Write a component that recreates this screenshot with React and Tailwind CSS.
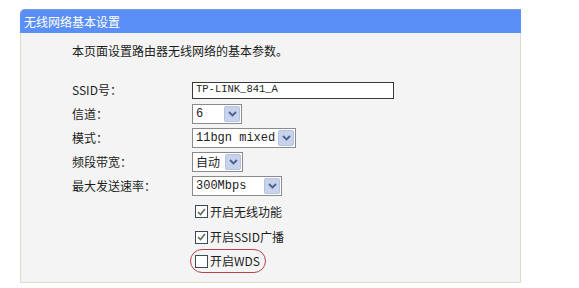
import React from 'react';

const cjk = { fontFamily: '"Noto Sans CJK SC", "Noto Sans", sans-serif' };
const mono = { fontFamily: '"Liberation Mono", "Noto Sans CJK SC", monospace' };

const Arrow = () => (
  <div className="w-[16px] h-[16px] bg-[#c7d3ec] border border-[#b4c3e2] rounded-[2px] flex items-center justify-center">
    <svg width="9" height="6" viewBox="0 0 9 6">
      <path d="M1 1 L4.5 4.5 L8 1" fill="none" stroke="#4a5f8c" strokeWidth="1.8" />
    </svg>
  </div>
);

const Select = ({ value, width, cjkText }) => (
  <div
    className="h-[20px] bg-white border border-[#8a8a8a] flex items-center justify-between pl-[3px] pr-[1px]"
    style={{ width }}
  >
    <span className="text-[12px] leading-[14px] text-[#222]" style={cjkText ? cjk : mono}>
      {value}
    </span>
    <Arrow />
  </div>
);

const Check = ({ checked }) => (
  <div className="w-[13px] h-[13px] bg-white border border-[#3d4a55] flex items-center justify-center">
    {checked && (
      <svg width="9" height="8" viewBox="0 0 9 8">
        <path d="M1 4 L3.5 6.5 L8 1" fill="none" stroke="#5a6e5a" strokeWidth="1.6" />
      </svg>
    )}
  </div>
);

const Row = ({ label, children }) => (
  <div className="h-[24px] flex items-center">
    <div className="w-[120px] text-[12px] text-[#1c1c1c]" style={cjk}>
      {label}
    </div>
    {children}
  </div>
);

const CheckRow = ({ label, checked, circled, h }) => (
  <div className="flex items-center pl-[118px]" style={{ height: h }}>
    <div
      className={
        'flex items-center gap-[2px] h-[24px] pl-[4px] pr-[5px] rounded-full border ' +
        (circled ? 'border-[#b8404e]' : 'border-transparent')
      }
    >
      <Check checked={checked} />
      <span className="text-[12px] text-[#1c1c1c]" style={cjk}>
        {label}
      </span>
    </div>
  </div>
);

export default function App() {
  return (
    <div className="w-[579px] h-[288px] bg-white pt-[9px] pl-[20px]">
      <div className="w-[501px]">
        <div className="h-[24px] bg-[#5b8ff8] border-t border-[#7a9fd8] rounded-tl-[5px] flex items-center pl-[4px]">
          <span className="text-[12px] text-white" style={cjk}>
            无线网络基本设置
          </span>
        </div>
        <div className="h-[250px] bg-[#f4f4f4] border-l border-r border-b border-[#dcdcc6] pt-[11px] pl-[51px]">
          <div className="h-[14px] leading-[14px] text-[12px] text-[#1c1c1c] mb-[20px]" style={cjk}>
            本页面设置路由器无线网络的基本参数。
          </div>
          <Row label="SSID号：">
            <div className="w-[202px] h-[17px] bg-white border border-[#3a3a3a] flex items-center pl-[3px]">
              <span className="text-[10.5px] text-[#222]" style={mono}>
                TP-LINK_841_A
              </span>
            </div>
          </Row>
          <Row label="信道：">
            <Select value="6" width={50} />
          </Row>
          <Row label="模式：">
            <Select value="11bgn mixed" width={104} />
          </Row>
          <Row label="频段带宽：">
            <Select value="自动" width={51} cjkText />
          </Row>
          <Row label="最大发送速率：">
            <Select value="300Mbps" width={90} />
          </Row>
          <CheckRow label="开启无线功能" checked h={27} />
          <CheckRow label="开启SSID广播" checked h={24} />
          <CheckRow label="开启WDS" circled h={24} />
        </div>
      </div>
    </div>
  );
}
